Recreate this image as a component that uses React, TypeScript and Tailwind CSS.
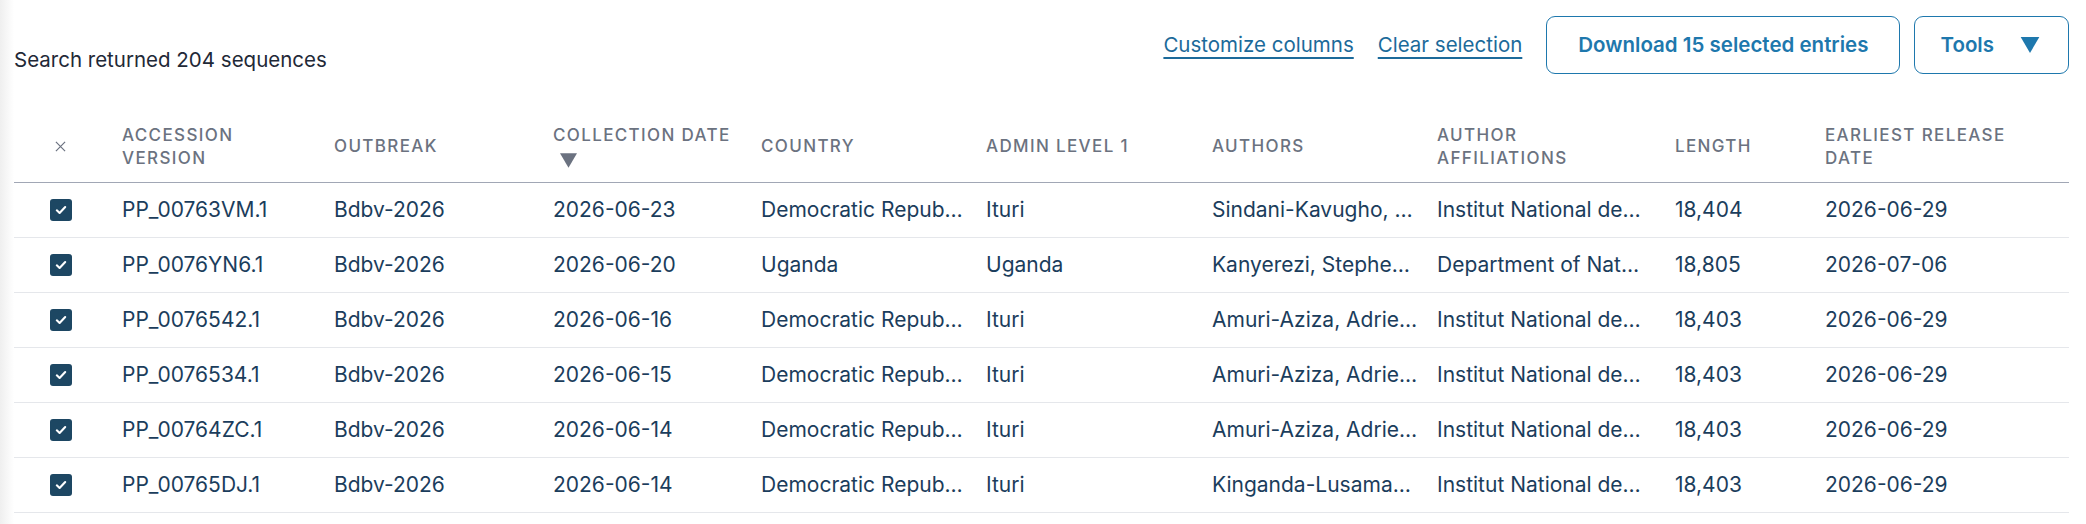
import React from "react";

type Row = {
  accession: string;
  outbreak: string;
  collected: string;
  country: string;
  admin1: string;
  authors: string;
  affiliations: string;
  length: string;
  released: string;
};

const rows: Row[] = [
  { accession: "PP_00763VM.1", outbreak: "Bdbv-2026", collected: "2026-06-23", country: "Democratic Repub…", admin1: "Ituri", authors: "Sindani-Kavugho, …", affiliations: "Institut National de…", length: "18,404", released: "2026-06-29" },
  { accession: "PP_0076YN6.1", outbreak: "Bdbv-2026", collected: "2026-06-20", country: "Uganda", admin1: "Uganda", authors: "Kanyerezi, Stephe…", affiliations: "Department of Nat…", length: "18,805", released: "2026-07-06" },
  { accession: "PP_0076542.1", outbreak: "Bdbv-2026", collected: "2026-06-16", country: "Democratic Repub…", admin1: "Ituri", authors: "Amuri-Aziza, Adrie…", affiliations: "Institut National de…", length: "18,403", released: "2026-06-29" },
  { accession: "PP_0076534.1", outbreak: "Bdbv-2026", collected: "2026-06-15", country: "Democratic Repub…", admin1: "Ituri", authors: "Amuri-Aziza, Adrie…", affiliations: "Institut National de…", length: "18,403", released: "2026-06-29" },
  { accession: "PP_00764ZC.1", outbreak: "Bdbv-2026", collected: "2026-06-14", country: "Democratic Repub…", admin1: "Ituri", authors: "Amuri-Aziza, Adrie…", affiliations: "Institut National de…", length: "18,403", released: "2026-06-29" },
  { accession: "PP_00765DJ.1", outbreak: "Bdbv-2026", collected: "2026-06-14", country: "Democratic Repub…", admin1: "Ituri", authors: "Kinganda-Lusama…", affiliations: "Institut National de…", length: "18,403", released: "2026-06-29" },
];

function Caret({ className }: { className: string }) {
  return (
    <svg viewBox="0 0 14 12" className={className} aria-hidden="true">
      <polygon points="0,0 14,0 7,12" fill="currentColor" />
    </svg>
  );
}

function Checkbox() {
  return (
    <span className="flex h-[22px] w-[22px] items-center justify-center rounded-[3px] bg-[#1d4763]">
      <svg viewBox="0 0 16 16" className="h-[14px] w-[14px]" aria-hidden="true">
        <path d="M3.2 8.4 L6.4 11.4 L12.8 4.6" fill="none" stroke="white" strokeWidth="2.4" strokeLinecap="round" strokeLinejoin="round" />
      </svg>
    </span>
  );
}

function HeaderCell({ children }: { children: React.ReactNode }) {
  return (
    <th className="h-[72px] border-b border-[#a1a7b5] p-0 text-left align-middle text-[17px] font-medium uppercase leading-[23px] tracking-[0.08em] text-[#6b7280]">
      {children}
    </th>
  );
}

function Cell({ children }: { children: React.ReactNode }) {
  return (
    <td className="h-[55px] overflow-hidden whitespace-nowrap border-b border-[#e5e7eb] p-0 align-middle text-[21px] text-[#1b3d5c]">
      {children}
    </td>
  );
}

export default function App() {
  return (
    <div className="flex min-h-[524px] w-[2086px] overflow-hidden bg-white font-[Inter,sans-serif] antialiased">
      <div className="w-[14px] shrink-0 bg-linear-to-r from-[#efefef] to-white" />
      <div className="flex-1 pr-[17px]">
        <div className="flex items-end justify-between pt-[16px]">
          <p className="text-[20.5px] leading-[28px] text-[#1f2937]">Search returned 204 sequences</p>
          <div className="flex items-center">
            <div className="flex items-center gap-[24px] text-[20.5px] text-[#1c6a9a]">
              <button className="underline decoration-[1.5px] underline-offset-[5px]">Customize columns</button>
              <button className="underline decoration-[1.5px] underline-offset-[5px]">Clear selection</button>
            </div>
            <button className="ml-[24px] h-[58px] rounded-[9px] border border-[#1e78ad] px-[31px] text-[20.5px] font-semibold text-[#1e78ad]">
              Download 15 selected entries
            </button>
            <button className="ml-[14px] flex h-[58px] items-center gap-[26px] rounded-[9px] border border-[#1e78ad] pl-[25px] pr-[28px] text-[20.5px] font-semibold text-[#1e78ad]">
              Tools
              <Caret className="h-[16px] w-[20px]" />
            </button>
          </div>
        </div>

        <table className="mt-[37px] w-[2055px] table-fixed border-separate border-spacing-0">
          <colgroup>
            <col className="w-[108px]" />
            <col className="w-[212px]" />
            <col className="w-[219px]" />
            <col className="w-[208px]" />
            <col className="w-[225px]" />
            <col className="w-[226px]" />
            <col className="w-[225px]" />
            <col className="w-[238px]" />
            <col className="w-[150px]" />
            <col className="w-[244px]" />
          </colgroup>
          <thead>
            <tr>
              <HeaderCell>
                <span className="flex pl-[41px] text-[#6b7280]">
                  <svg viewBox="0 0 12 12" className="h-[11px] w-[11px]" aria-hidden="true">
                    <path d="M1 1 L11 11 M11 1 L1 11" stroke="currentColor" strokeWidth="1.3" fill="none" />
                  </svg>
                </span>
              </HeaderCell>
              <HeaderCell>Accession<br />Version</HeaderCell>
              <HeaderCell>Outbreak</HeaderCell>
              <HeaderCell>
                Collection date<br />
                <Caret className="ml-[7px] mt-[6px] inline-block h-[15px] w-[17px] align-top" />
              </HeaderCell>
              <HeaderCell>Country</HeaderCell>
              <HeaderCell>Admin level 1</HeaderCell>
              <HeaderCell>Authors</HeaderCell>
              <HeaderCell>Author<br />Affiliations</HeaderCell>
              <HeaderCell>Length</HeaderCell>
              <HeaderCell>Earliest release<br />date</HeaderCell>
            </tr>
          </thead>
          <tbody>
            {rows.map((r) => (
              <tr key={r.accession}>
                <Cell>
                  <span className="flex pl-[36px]">
                    <Checkbox />
                  </span>
                </Cell>
                <Cell>{r.accession}</Cell>
                <Cell>{r.outbreak}</Cell>
                <Cell>{r.collected}</Cell>
                <Cell>{r.country}</Cell>
                <Cell>{r.admin1}</Cell>
                <Cell>{r.authors}</Cell>
                <Cell>{r.affiliations}</Cell>
                <Cell>{r.length}</Cell>
                <Cell>{r.released}</Cell>
              </tr>
            ))}
          </tbody>
        </table>
      </div>
    </div>
  );
}
